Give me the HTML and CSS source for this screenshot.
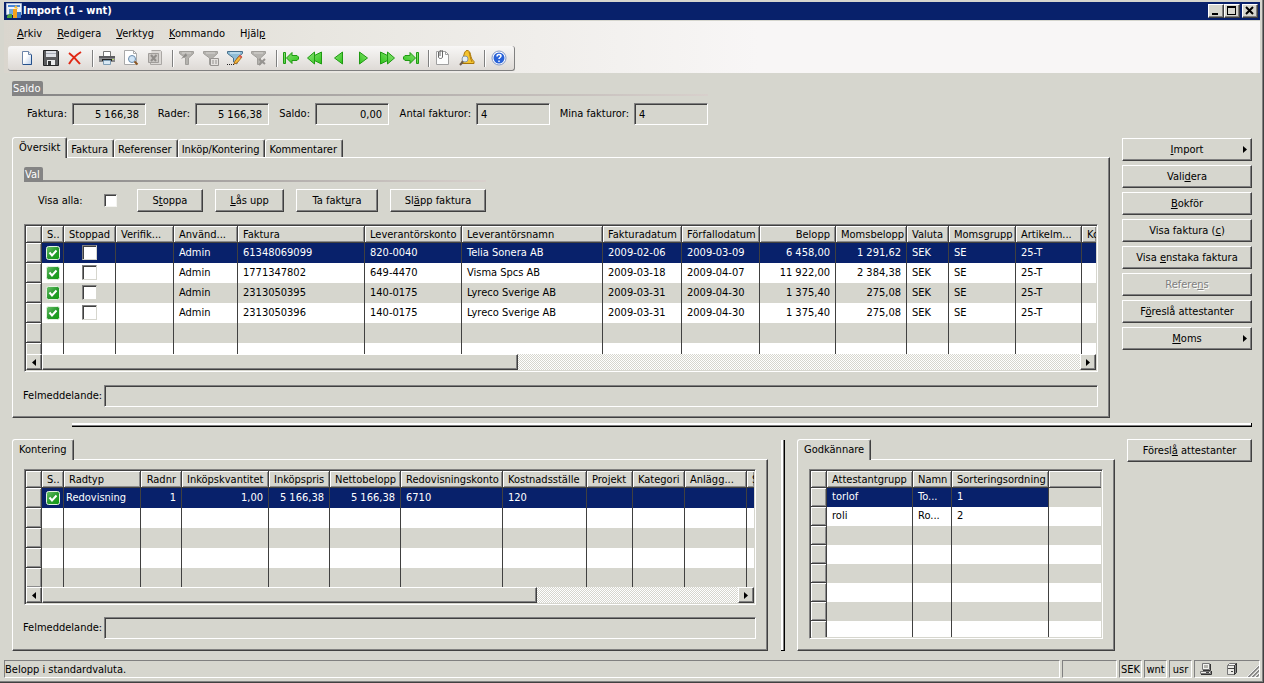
FILE: index.html
```html
<!DOCTYPE html>
<html lang="sv">
<head>
<meta charset="utf-8">
<title>Import (1 - wnt)</title>
<link rel="stylesheet" href="styles.css">
</head>
<body>
<svg class="defs" width="0" height="0" aria-hidden="true">
  <defs>
    <linearGradient id="greenFill" x1="0" y1="0" x2="1" y2="1"><stop offset="0" stop-color="#8fe27a"/><stop offset="1" stop-color="#2cc418"/></linearGradient>
    <linearGradient id="okFill" x1="0" y1="0" x2="1" y2="1"><stop offset="0" stop-color="#6cc46a"/><stop offset=".5" stop-color="#2a9a30"/><stop offset="1" stop-color="#10a010"/></linearGradient>
    <linearGradient id="paperFill" x1="0" y1="0" x2="1" y2="1"><stop offset=".4" stop-color="#fff"/><stop offset="1" stop-color="#b8cce8"/></linearGradient>
    <symbol id="ok" viewBox="0 0 14 14"><rect x=".5" y=".5" width="13" height="13" rx="2" fill="url(#okFill)" stroke="#e4f2e2"/><path d="M3.5 6.5l2.5 3 4.5-5" fill="none" stroke="#fff" stroke-width="2"/></symbol>
    <symbol id="funnel" viewBox="0 0 16 16"><path d="M.5 1.500h14v2L9.500 8v6.500h-3V8L.5 3.500z" fill="#b4b2ae" stroke="#a09e9a"/><path d="M3 3h9" stroke="#d8d6d3"/></symbol>
    <symbol id="left" viewBox="0 0 16 16"><path d="M3.500 8l8-6v12z" fill="url(#greenFill)" stroke="#1f9a12"/></symbol>
    <symbol id="dleft" viewBox="0 0 16 16"><path d="M.5 8l7-6v3.500L14.500 2v12L7.500 10.500V14z" fill="url(#greenFill)" stroke="#1f9a12"/><path d="M7.500 5v6" stroke="#1f9a12"/></symbol>
    <symbol id="first" viewBox="0 0 16 16"><path d="M.5 2.500h2v11h-2zM3.500 8L9 2.500v3h5l1.500 1.500v2L14 10.500H9v3z" fill="url(#greenFill)" stroke="#1f9a12"/></symbol>
  </defs>
</svg>

<div class="window">
  <header class="titlebar">
    <svg width="16" height="16" viewBox="0 0 16 16"><path d="M.5.500h15v11H.5z" fill="#eef3fa" stroke="#a8b8d0"/><path d="M2 2h12v2H2z" fill="#4a88d8"/><path d="M3 6h4v5H3z" fill="#6fa8e0"/><path d="M1 13l2-2h3v4H1z" fill="#49a043"/><path d="M7 6h4v9H7z" fill="#f5a21c"/><path d="M11 9h4v6h-4z" fill="#3c76c8"/><path d="M8 5l2-3 2 4z" fill="#f9c23a"/></svg>
    <h1>Import (1 - wnt)</h1>
    <button class="caption" aria-label="Minimera"><svg width="12" height="10"><path d="M2 7h6v2H2z"/></svg></button>
    <button class="caption" aria-label="Maximera"><svg width="12" height="10"><path d="M1 0h9v9H1zM2 2v6h7V2z" fill-rule="evenodd"/></svg></button>
    <button class="caption close" aria-label="Stäng"><svg width="12" height="10"><path d="M2 1l7 7M9 1L2 8" stroke="#000" stroke-width="2"/></svg></button>
  </header>

  <div class="bands">
    <nav class="menu">
      <button><u>A</u>rkiv</button><button><u>R</u>edigera</button><button><u>V</u>erktyg</button><button><u>K</u>ommando</button><button>Hjäl<u>p</u></button>
    </nav>
    <div class="toolbar">
      <button aria-label="Ny"><svg viewBox="0 0 16 16"><path d="M3.500 1.500h6l3 3v10h-9z" fill="url(#paperFill)" stroke="#6c84a8"/><path d="M12.500 5v9.500H4" fill="none" stroke="#24508c"/><path d="M9.500 1.500v3h3" fill="#e4edf8" stroke="#6c84a8"/></svg></button>
      <button aria-label="Spara"><svg viewBox="0 0 16 16"><path d="M.5.500h14l1 1v14H.5z" fill="#5c5c5e" stroke="#252526"/><path d="M3 1h10v6H3z" fill="#dfe1e6"/><path d="M3 3h10v1H3z" fill="#a9adb8"/><path d="M4 10h8v5H4z" fill="#ececec"/><path d="M5 11h3v4H5z" fill="#333"/></svg></button>
      <button aria-label="Ta bort"><svg viewBox="0 0 16 16"><path d="M2 3c4 3 7 6 11 11M14 2C9 5 5 9 2 14" fill="none" stroke="#e02814" stroke-width="2"/></svg></button>
      <span class="sep"></span>
      <button aria-label="Skriv ut"><svg viewBox="0 0 16 16"><path d="M4.500 1.500h7v5h-7z" fill="#fff" stroke="#777"/><path d="M0 6h16v6H0z" fill="#8a8a8c"/><path d="M0 6h16v2H0z" fill="#5c5c60"/><path d="M3 9h10v2H3z" fill="#222"/><path d="M4.500 10.500h7v4h-7z" fill="#d8e8f4" stroke="#7f9db4"/><path d="M13 9h2v1h-2z" fill="#b9e070"/></svg></button>
      <button aria-label="Förhandsgranska"><svg viewBox="0 0 16 16"><path d="M1.500.500h9l3 3v11h-12z" fill="#fff" stroke="#a9a9a9"/><path d="M10.500.500v3h3" fill="none" stroke="#a9a9a9"/><circle cx="9" cy="9" r="3.500" fill="#cfe4f6" stroke="#6a8bac"/><path d="M11.500 11.500l3 3" stroke="#8a5420" stroke-width="2"/></svg></button>
      <button aria-label="Excel" disabled><svg viewBox="0 0 16 16"><path d="M4.500.500h9l1 1v13h-11v-2" fill="#dcd9d6" stroke="#aaa7a4"/><path d="M1.500 3.500h10v9h-10z" fill="#c9c6c3" stroke="#a09d9a"/><path d="M4 5l5 6M9.500 5L4 11" stroke="#908d8a" stroke-width="2"/></svg></button>
      <span class="sep"></span>
      <button aria-label="Filter" disabled><svg viewBox="0 0 16 16"><use href="#funnel"/><path d="M2 9l5-6 1 3z" fill="#8c8a87"/></svg></button>
      <button aria-label="Filter efter fält" disabled><svg viewBox="0 0 16 16"><use href="#funnel"/><path d="M7.500 8.500h8v7h-8z" fill="#e4e1de" stroke="#969390"/><path d="M9 11h2m1 0h2m-5 2h2m1 0h2" stroke="#969390"/></svg></button>
      <button aria-label="Redigera filter"><svg viewBox="0 0 16 16"><path d="M.5 1.500h15v2L10 8v6L6.500 12V8L.5 3.500z" fill="#8fbdd6" stroke="#48708c"/><path d="M3 3h10" stroke="#e0f4fc"/><path d="M7 14l1-3 5-6 2 2-5 6z" fill="#f6b93c" stroke="#a86e20"/><path d="M12.500 5.500l2 2" stroke="#d85a5a" stroke-width="2"/><path d="M0 14.500h7" stroke="#222" stroke-dasharray="1 1"/></svg></button>
      <button aria-label="Ta bort filter" disabled><svg viewBox="0 0 16 16"><use href="#funnel"/><path d="M8 9l6 5M14 9l-6 6" stroke="#979491" stroke-width="2"/></svg></button>
      <span class="sep"></span>
      <button aria-label="Första"><svg><use href="#first"/></svg></button>
      <button aria-label="Föregående sida"><svg><use href="#dleft"/></svg></button>
      <button aria-label="Föregående"><svg><use href="#left"/></svg></button>
      <button aria-label="Nästa"><svg class="flip"><use href="#left"/></svg></button>
      <button aria-label="Nästa sida"><svg class="flip"><use href="#dleft"/></svg></button>
      <button aria-label="Sista"><svg class="flip"><use href="#first"/></svg></button>
      <span class="sep"></span>
      <button aria-label="Bilagor"><svg viewBox="0 0 16 16"><path d="M1.500 1.500h9l3 3v10h-12z" fill="#fdfdfd" stroke="#a0a0a0"/><path d="M10.500 1.500v3h3" fill="none" stroke="#a0a0a0"/><path d="M3.500 2v5c0 2 4 2 4 0V1c0-1.500-2.500-1.500-2.500 0v5" fill="none" stroke="#666"/></svg></button>
      <button aria-label="Avisering"><svg viewBox="0 0 16 16"><path d="M8 .500c2 0 3 1.500 3.500 4s1 5 3.500 7v2H3v-2c1-2 1.500-5 2-7S6.500.500 8 .500z" fill="#f4c430" stroke="#a87408"/><path d="M10 2c1 3 1 6 3 10" stroke="#b57e0c" fill="none"/><circle cx="6" cy="9" r="3" fill="#e4eef6" stroke="#8796a4"/><path d="M4 11.500L1 15" stroke="#6c5a4c" stroke-width="2"/></svg></button>
      <span class="sep"></span>
      <button aria-label="Hjälp"><svg viewBox="0 0 16 16"><circle cx="8" cy="8" r="7" fill="#fff" stroke="#8398c8"/><circle cx="8" cy="8" r="5.500" fill="#2a62d8"/><path d="M6 6.500c0-3 4-2.500 4-.5 0 1.500-2 1.500-2 3M8 10.500v1.500" fill="none" stroke="#fff" stroke-width="1.500"/></svg></button>
    </div>
  </div>

  <main>
    <section class="saldo">
      <h2 class="group"><span>Saldo</span></h2>
      <div class="totals">
        <label for="t1">Faktura:</label><input id="t1" class="num" value="5 166,38" readonly>
        <label for="t2">Rader:</label><input id="t2" class="num" value="5 166,38" readonly>
        <label for="t3">Saldo:</label><input id="t3" class="num" value="0,00" readonly>
        <label for="t4">Antal fakturor:</label><input id="t4" value="4" readonly>
        <label for="t5">Mina fakturor:</label><input id="t5" value="4" readonly>
      </div>
    </section>

    <div class="upper">
      <section class="tabbed">
        <div class="tabs" role="tablist">
          <button role="tab" class="active">Översikt</button><button role="tab">Faktura</button><button role="tab">Referenser</button><button role="tab">Inköp/Kontering</button><button role="tab">Kommentarer</button>
        </div>
        <div class="panel">
          <h2 class="group short"><span>Val</span></h2>
          <div class="choices">
            <label for="all">Visa alla:</label><input type="checkbox" id="all">
            <button class="btn w66">S<u>t</u>oppa</button><button class="btn w69"><u>L</u>ås upp</button><button class="btn w82">Ta fakt<u>u</u>ra</button><button class="btn w96">Sl<u>ä</u>pp faktura</button>
          </div>
          <div class="grid">
            <div class="view main-view">
            <table>
              <colgroup><col style="width:16px"><col style="width:22px"><col style="width:52px"><col style="width:58px"><col style="width:64px"><col style="width:127px"><col style="width:97px"><col style="width:141px"><col style="width:79px"><col style="width:78px"><col style="width:76px"><col style="width:71px"><col style="width:42px"><col style="width:67px"><col style="width:66px"><col></colgroup>
              <thead><tr><th></th><th>S..</th><th>Stoppad</th><th>Verifik...</th><th>Använd...</th><th>Faktura</th><th>Leverantörskonto</th><th>Leverantörsnamn</th><th>Fakturadatum</th><th>Förfallodatum</th><th class="r">Belopp</th><th class="r">Momsbelopp</th><th>Valuta</th><th>Momsgrupp</th><th>Artikelm...</th><th>Ko</th></tr></thead>
              <tbody>
              <tr class="sel"><th></th><td class="i"><svg><use href="#ok"/></svg></td><td class="i"><input type="checkbox" aria-label="Stoppad"></td><td></td><td>Admin</td><td>61348069099</td><td>820-0040</td><td>Telia Sonera AB</td><td>2009-02-06</td><td>2009-03-09</td><td class="r">6 458,00</td><td class="r">1 291,62</td><td>SEK</td><td>SE</td><td>25-T</td><td></td></tr>
              <tr><th></th><td class="i"><svg><use href="#ok"/></svg></td><td class="i"><input type="checkbox" aria-label="Stoppad"></td><td></td><td>Admin</td><td>1771347802</td><td>649-4470</td><td>Visma Spcs AB</td><td>2009-03-18</td><td>2009-04-07</td><td class="r">11 922,00</td><td class="r">2 384,38</td><td>SEK</td><td>SE</td><td>25-T</td><td></td></tr>
              <tr><th></th><td class="i"><svg><use href="#ok"/></svg></td><td class="i"><input type="checkbox" aria-label="Stoppad"></td><td></td><td>Admin</td><td>2313050395</td><td>140-0175</td><td>Lyreco Sverige AB</td><td>2009-03-31</td><td>2009-04-30</td><td class="r">1 375,40</td><td class="r">275,08</td><td>SEK</td><td>SE</td><td>25-T</td><td></td></tr>
              <tr><th></th><td class="i"><svg><use href="#ok"/></svg></td><td class="i"><input type="checkbox" aria-label="Stoppad"></td><td></td><td>Admin</td><td>2313050396</td><td>140-0175</td><td>Lyreco Sverige AB</td><td>2009-03-31</td><td>2009-04-30</td><td class="r">1 375,40</td><td class="r">275,08</td><td>SEK</td><td>SE</td><td>25-T</td><td></td></tr>
              <tr><th></th><td></td><td></td><td></td><td></td><td></td><td></td><td></td><td></td><td></td><td></td><td></td><td></td><td></td><td></td><td></td></tr>
              <tr><th></th><td></td><td></td><td></td><td></td><td></td><td></td><td></td><td></td><td></td><td></td><td></td><td></td><td></td><td></td><td></td></tr>
              </tbody>
            </table>
            </div>
            <div class="scroll"><button aria-label="Rulla vänster"><svg width="4" height="7"><path d="M4 0v7L0 3.500z"/></svg></button><span class="thumb" style="width:44.500%"></span><button class="end" aria-label="Rulla höger"><svg width="4" height="7"><path d="M0 0v7l4-3.500z"/></svg></button></div>
          </div>
          <div class="message"><label for="m1">Felmeddelande:</label><input id="m1" readonly></div>
        </div>
      </section>
      <aside class="actions">
        <button class="btn"><u>I</u>mport<svg class="more" width="4" height="7"><path d="M0 0v7l4-3.500z"/></svg></button>
        <button class="btn">Vali<u>d</u>era</button>
        <button class="btn"><u>B</u>okför</button>
        <button class="btn">Visa faktura (<u>c</u>)</button>
        <button class="btn">Visa <u>e</u>nstaka faktura</button>
        <button class="btn" disabled>Refere<u>n</u>s</button>
        <button class="btn">F<u>ö</u>reslå attestanter</button>
        <button class="btn"><u>M</u>oms<svg class="more" width="4" height="7"><path d="M0 0v7l4-3.500z"/></svg></button>
      </aside>
    </div>

    <div class="split-h"></div>

    <div class="lower">
      <section class="tabbed posting">
        <div class="tabs" role="tablist"><button role="tab" class="active">Kontering</button></div>
        <div class="panel">
          <div class="grid">
            <div class="view post-view">
            <table>
              <colgroup><col style="width:16px"><col style="width:22px"><col style="width:77px"><col style="width:41px"><col style="width:87px"><col style="width:61px"><col style="width:71px"><col style="width:102px"><col style="width:84px"><col style="width:46px"><col style="width:52px"><col style="width:62px"><col></colgroup>
              <thead><tr><th></th><th>S..</th><th>Radtyp</th><th class="r">Radnr</th><th class="r">Inköpskvantitet</th><th class="r">Inköpspris</th><th class="r">Nettobelopp</th><th>Redovisningskonto</th><th>Kostnadsställe</th><th>Projekt</th><th>Kategori</th><th>Anlägg...</th><th>S</th></tr></thead>
              <tbody>
              <tr class="sel"><th></th><td class="i"><svg><use href="#ok"/></svg></td><td class="tight">Redovisning</td><td class="r">1</td><td class="r">1,00</td><td class="r">5 166,38</td><td class="r">5 166,38</td><td>6710</td><td>120</td><td></td><td></td><td></td><td></td></tr>
              <tr><th></th><td></td><td></td><td></td><td></td><td></td><td></td><td></td><td></td><td></td><td></td><td></td><td></td></tr>
              <tr><th></th><td></td><td></td><td></td><td></td><td></td><td></td><td></td><td></td><td></td><td></td><td></td><td></td></tr>
              <tr><th></th><td></td><td></td><td></td><td></td><td></td><td></td><td></td><td></td><td></td><td></td><td></td><td></td></tr>
              <tr><th></th><td></td><td></td><td></td><td></td><td></td><td></td><td></td><td></td><td></td><td></td><td></td><td></td></tr>
              </tbody>
            </table>
            </div>
            <div class="scroll"><button aria-label="Rulla vänster"><svg width="4" height="7"><path d="M4 0v7L0 3.500z"/></svg></button><span class="thumb" style="width:68%"></span><button class="end" aria-label="Rulla höger"><svg width="4" height="7"><path d="M0 0v7l4-3.500z"/></svg></button></div>
          </div>
          <div class="message"><label for="m2">Felmeddelande:</label><input id="m2" readonly></div>
        </div>
      </section>
      <div class="split-v"></div>
      <section class="tabbed approvers">
        <div class="tabs" role="tablist"><button role="tab" class="active">Godkännare</button></div>
        <div class="panel">
          <div class="grid">
            <div class="view approver-view">
            <table class="dense">
              <colgroup><col style="width:16px"><col style="width:86px"><col style="width:39px"><col style="width:97px"><col></colgroup>
              <thead><tr><th></th><th>Attestantgrupp</th><th>Namn</th><th>Sorteringsordning</th><th></th></tr></thead>
              <tbody>
              <tr class="sel"><th></th><td>torlof</td><td>To...</td><td>1</td><td class="rest"></td></tr>
              <tr><th></th><td>roli</td><td>Ro...</td><td>2</td><td></td></tr>
              <tr><th></th><td></td><td></td><td></td><td></td></tr>
              <tr><th></th><td></td><td></td><td></td><td></td></tr>
              <tr><th></th><td></td><td></td><td></td><td></td></tr>
              <tr><th></th><td></td><td></td><td></td><td></td></tr>
              <tr><th></th><td></td><td></td><td></td><td></td></tr>
              <tr><th></th><td></td><td></td><td></td><td></td></tr>
              </tbody>
            </table>
            </div>
          </div>
        </div>
      </section>
      <aside class="propose"><button class="btn">Föresl<u>å</u> attestanter</button></aside>
    </div>
  </main>

  <footer class="status">
    <span class="text">Belopp i standardvaluta.</span><span class="blank"></span><span class="cell">SEK</span><span class="cell">wnt</span><span class="cell">usr</span>
    <span class="icons">
      <svg width="14" height="14" viewBox="0 0 14 14"><path d="M3.500 1.500h7v6h-7z" fill="#f4f4f0" stroke="#777"/><path d="M5 3h4v3H5z" fill="#b4b4ae"/><path d="M11.500 2v6.500H4" fill="none" stroke="#333"/><path d="M1.500 9.500h10v2h-10z" fill="#f0f0ec" stroke="#777"/><path d="M2 12.500h10.500V9" fill="none" stroke="#333"/><path d="M7 10.500h3" stroke="#444"/></svg>
      <svg width="14" height="14" viewBox="0 0 14 14"><path d="M2.500 3.500l2-2h7l-2 2z" fill="#fafafa" stroke="#777"/><path d="M2.500 3.500h7v9h-7z" fill="#eaeae6" stroke="#777"/><path d="M9.500 3.500l2-2v9l-2 2z" fill="#888" stroke="#333"/><path d="M3 6.500h6M6 9.500h2" stroke="#444"/></svg>
      <svg class="grip" width="12" height="12" viewBox="0 0 12 12"><path d="M0 12L12 0M4 12l8-8M8 12l4-4" stroke="#fff"/><path d="M1 12.500L12.500 1M5 12.500L12.500 5M9 12.500L12.500 9" stroke="#808080" stroke-width="1.500"/></svg>
    </span>
  </footer>
</div>
</body>
</html>
```
FILE: styles.css
```css
:root {
  --face: #d6d6ce;
  --light: #fff;
  --shade: #808080;
  --dark: #404040;
  --navy: #08216b;
}

* { box-sizing: border-box; }

body {
  margin: 0;
  background: var(--face);
  color: #000;
  font: 11px/14px "DejaVu Sans Condensed", "DejaVu Sans", sans-serif;
}

button, input { font: inherit; color: inherit; }
button { margin: 0; padding: 0; border: 0; background: none; white-space: nowrap; }
h1, h2 { margin: 0; font-size: inherit; }
label { white-space: nowrap; }
svg { display: block; }
.defs { position: absolute; }

.window {
  display: flex;
  flex-direction: column;
  min-height: 100vh;
  padding: 2px 2px 2px 4px;
  border: solid var(--dark);
  border-width: 0 1px 1px 0;
  box-shadow: inset -1px -1px var(--shade);
}

/* Title bar */
.titlebar {
  display: flex;
  align-items: center;
  height: 18px;
  margin-right: 1px;
  padding: 0 2px;
  background: var(--navy);
  color: #fff;
}
.titlebar h1 { flex: 1; margin-left: 1px; font-weight: bold; }
.caption, .scroll button {
  border: 1px solid;
  border-color: var(--light) var(--dark) var(--dark) var(--light);
  background: var(--face);
  box-shadow: inset -1px -1px var(--shade);
}
.caption { width: 16px; height: 14px; padding: 1px; }
.close { margin-left: 2px; }

/* Menu and toolbar */
.bands {
  height: 52px;
  margin: 1px 1px 0 0;
  background: linear-gradient(90deg, #dad6ce, #e8e6e0 25%, #f8f6f6 60%);
}
.menu { display: flex; gap: 15px; height: 25px; padding-left: 13px; }
.toolbar {
  display: flex;
  align-items: center;
  width: max-content;
  height: 25px;
  margin-left: 4px;
  padding: 0 3px 0 7px;
  border: solid var(--shade);
  border-width: 0 1px 1px 0;
  border-radius: 3px;
  background: linear-gradient(#f8f7f6, #dedad6);
}
.toolbar button { width: 24px; padding: 0 4px; }
.toolbar svg { width: 16px; height: 16px; }
.toolbar .flip { transform: scaleX(-1); }
.sep { width: 1px; height: 17px; margin: 0 2px 0 5px; background: var(--shade); box-shadow: 1px 0 #fff; }

main { padding: 8px 9px 0 8px; }

/* Group headings with a fading rule */
.group {
  display: flex;
  height: 15px;
  max-width: 696px;
  background: linear-gradient(90deg, #848484, #d8d0cc) bottom / 100% 2px no-repeat;
  font-weight: normal;
  color: #fff;
}
.group span { padding: 1px 3px 0 1px; border-radius: 2px 2px 0 0; background: #848484; }
.short { max-width: 462px; }

.totals {
  display: grid;
  grid-template-columns: 60px 74px 49px 74px 46px 74px 87px 74px 84px 74px;
  align-items: center;
  margin-top: 7px;
}
.totals label { padding-right: 5px; text-align: right; }
.totals input, .message input {
  min-width: 0;
  height: 22px;
  padding: 0 4px;
  border: 1px solid;
  border-color: var(--shade) var(--light) var(--light) var(--shade);
  border-radius: 0;
  background: var(--face);
  box-shadow: inset 1px 1px var(--dark);
  outline: 0;
}
.totals .num { padding-right: 6px; text-align: right; }

/* Buttons */
.btn {
  height: 23px;
  border: 1px solid;
  border-color: var(--light) var(--dark) var(--dark) var(--light);
  box-shadow: inset -1px -1px var(--shade);
  text-align: center;
}
.btn:disabled { color: var(--shade); text-shadow: 1px 1px #fff; }
.w66 { width: 66px; }
.w69 { width: 69px; }
.w82 { width: 82px; }
.w96 { width: 96px; }

/* Tabs */
.tabs { display: flex; align-items: flex-end; height: 20px; }
.tabs button {
  height: 18px;
  padding: 2px 5px 0 3px;
  border: solid;
  border-width: 1px 1px 0;
  border-color: var(--light) var(--dark) var(--dark) var(--light);
  border-radius: 3px 2px 0 0;
  box-shadow: inset -1px 0 var(--shade);
}
.tabs .active {
  position: relative;
  height: 21px;
  margin-bottom: -1px;
  padding: 0 6px 1px;
  background: var(--face);
}
.panel {
  padding: 9px 11px 10px;
  border: 1px solid;
  border-color: var(--light) var(--dark) var(--dark) var(--light);
  box-shadow: inset -1px -1px var(--shade);
}

.upper { display: flex; gap: 12px; margin-top: 12px; }
.tabbed { flex: 1; min-width: 0; }
.actions { display: flex; flex-direction: column; gap: 4px; width: 130px; margin-top: 1px; }
.actions .btn { position: relative; }
.more { position: absolute; top: 7px; right: 4px; }

.choices { display: flex; align-items: center; gap: 12px; margin-top: 7px; padding-left: 14px; }
.choices label { width: 54px; }
input[type="checkbox"] {
  appearance: none;
  width: 13px;
  height: 13px;
  margin: 0;
  border: 1px solid;
  border-color: var(--shade) #f4f4f0 #f4f4f0 var(--shade);
  background: #fff;
  box-shadow: inset 1px 1px var(--dark);
}
.choices input[type="checkbox"] { margin-right: 8px; }

/* Data grids */
.grid {
  border: 1px solid;
  border-color: var(--shade) var(--light) var(--light) var(--shade);
  padding: 1px;
  box-shadow: inset 1px 1px var(--dark);
}
.choices + .grid { margin-top: 12px; }
.view { overflow: hidden; }
.main-view { height: 128px; }
.post-view { height: 116px; }
.approver-view { height: 166px; }

table { width: 100%; border-collapse: separate; border-spacing: 0; table-layout: fixed; }
th, td {
  height: 20px;
  padding: 0 5px 1px;
  overflow: hidden;
  border-right: 1px solid var(--dark);
  font-weight: normal;
  text-align: left;
  white-space: nowrap;
}
.dense td, .dense tbody th { height: 19px; }
thead th { height: 17px; padding: 2px 2px 0 5px; }
th {
  border-bottom: 1px solid var(--dark);
  box-shadow: inset 1px 1px var(--light), inset -1px -1px #8c8c8c;
}
tr > :last-child { border-right: 0; }
tbody tr:nth-child(even) td { background: #fff; }
tbody .sel td { background: var(--navy); color: #fff; }
tbody .sel .rest { background: var(--face); }
.r { padding-right: 5px; text-align: right; }
.i { padding: 0 0 1px; }
.i svg { width: 14px; height: 14px; margin: 0 auto; }
.i input[type="checkbox"] { display: block; width: 15px; height: 15px; margin: 0 auto; border-color: var(--shade) #d6d6ce #d6d6ce var(--shade); }
.tight { padding-left: 2px; }

.scroll {
  display: flex;
  height: 16px;
  background: repeating-conic-gradient(#fff 0 25%, var(--face) 0 50%) 0 0 / 2px 2px;
}
.scroll button { display: flex; align-items: center; justify-content: center; flex: none; width: 16px; height: 16px; }
.scroll .end { margin-left: auto; }
.thumb {
  border: 1px solid;
  border-color: var(--light) var(--dark) var(--dark) var(--light);
  background: var(--face);
  box-shadow: inset -1px -1px var(--shade);
}

.message { display: flex; align-items: center; margin-top: 13px; }
.message label { width: 81px; margin-left: -1px; }
.message input { flex: 1; }

/* Splitters */
.split-h {
  height: 4px;
  margin: 5px 0 0 60px;
  border: solid #000;
  border-width: 0 1px 1px 0;
  background: linear-gradient(#fff 66%, var(--shade) 66%);
}
.split-v {
  width: 4px;
  margin: 1px 12px 0 13px;
  border: solid #000;
  border-width: 0 1px 1px 0;
  background: linear-gradient(90deg, #fff 66%, var(--shade) 66%);
}

.lower { display: flex; margin-top: 12px; }
.lower .panel { padding-bottom: 11px; }
.lower .message { margin-top: 12px; }
.approvers { flex: 0 0 318px; }
.propose { width: 125px; margin: 0 0 0 12px; }
.propose .btn { width: 100%; }

/* Status bar */
.status { display: flex; gap: 2px; height: 18px; margin: auto 1px 2px 0; }
.status > span {
  border: 1px solid;
  border-color: var(--shade) var(--light) var(--light) var(--shade);
}
.status > .text { flex: 1; padding-top: 2px; }
.blank { width: 55px; }
.status > .cell { width: 23px; padding-top: 2px; text-align: center; }
.icons { display: flex; align-items: center; gap: 12px; width: 66px; padding-left: 4px; }
.grip { align-self: flex-end; margin-left: -4px; }
```
